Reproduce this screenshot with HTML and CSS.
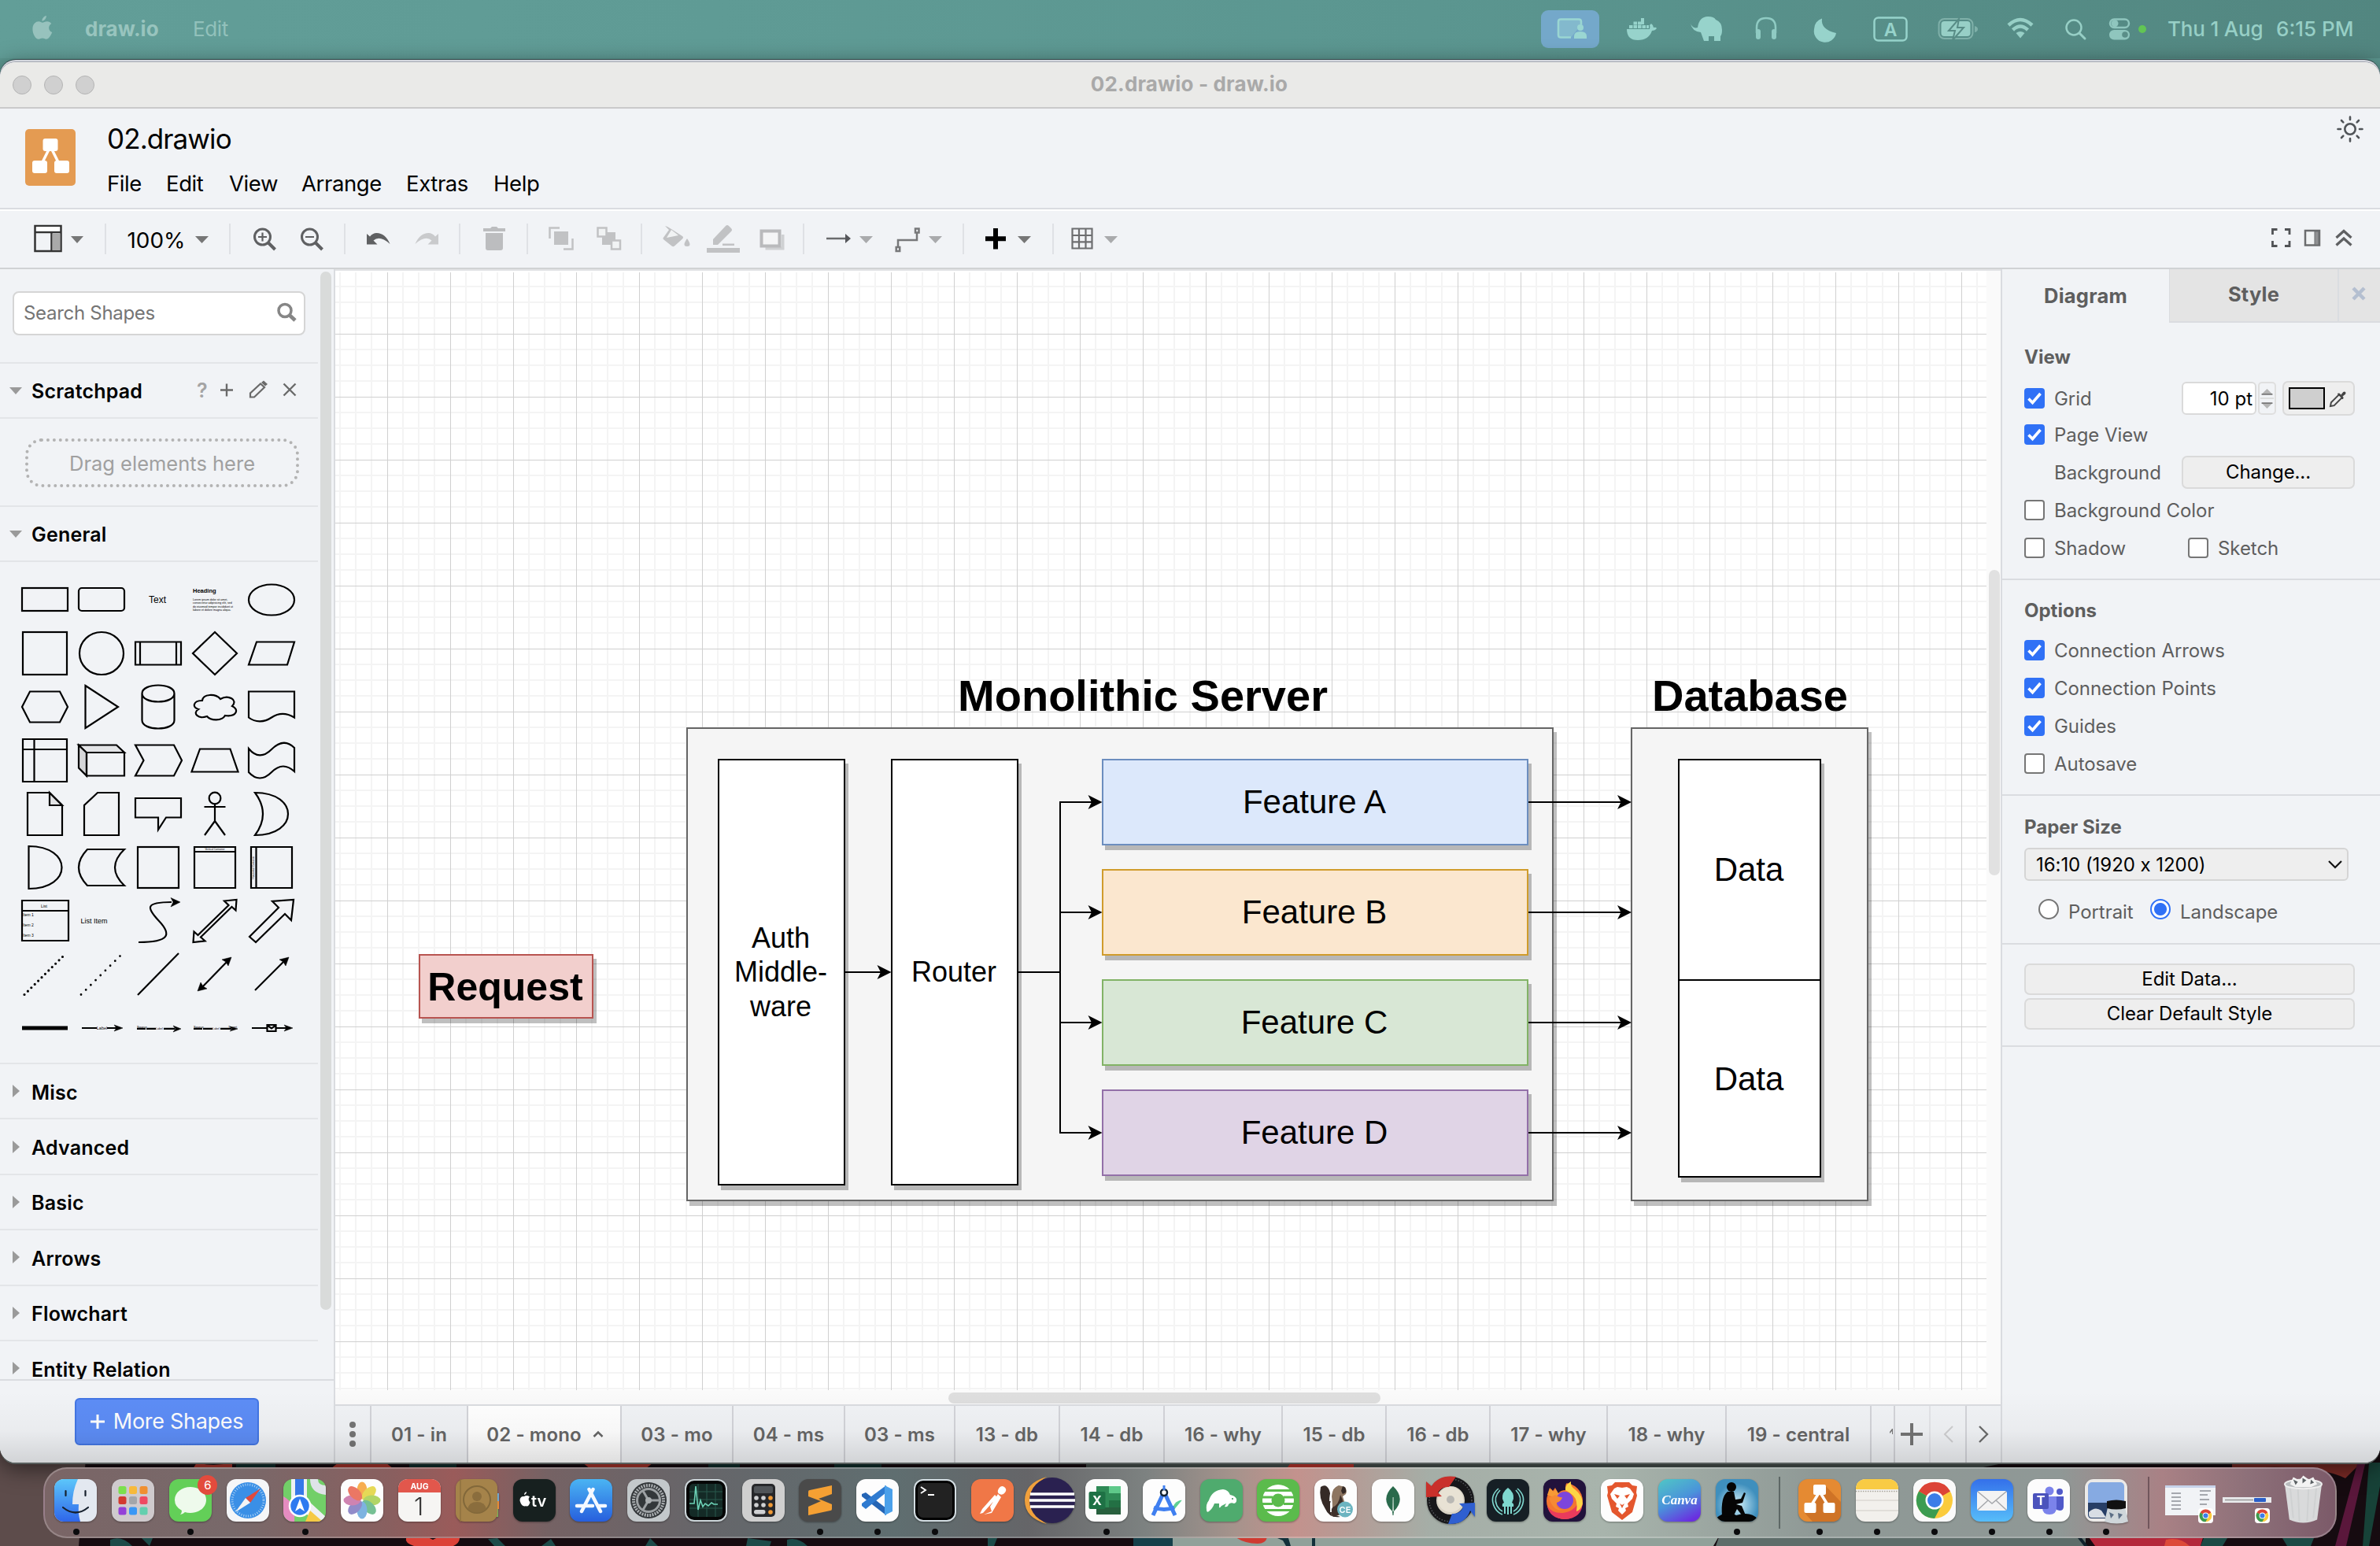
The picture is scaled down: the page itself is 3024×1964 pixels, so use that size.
FILE: index.html
```html
<!DOCTYPE html>
<html lang="en">
<head>
<meta charset="utf-8">
<title>02.drawio - draw.io</title>
<link rel="stylesheet" href="styles.css">
</head>
<body>
<svg class="wallpaper" viewBox="0 1840 3024 124" aria-hidden="true">
  <rect y="1840" width="3024" height="124" fill="#160b10"/>
  <path d="M0 1840H110L100 1964H0z" fill="#5d4c4b"/>
  <path d="M250 1858q20 6 45 0v8h-50zM430 1858h60l10 8h-80zM740 1858h90l-10 8h-70z" fill="#b8392f"/>
  <path d="M516 1954q-2 6 10 10h50q8-4 8-10-20-6-34 2-14-8-34-2z" fill="#dc4238"/>
  <path d="M140 1956q15-6 28 8h-28zM180 1954h14l-4 10zM620 1955l12-1 10 10h-14zM700 1955l-12 9h18zM820 1964l6-10 10 10zM950 1954l30 4-2 6h-30zM1000 1956q14-4 26 8h-26zM1255 1954h12l-4 10h-8z" fill="#1d4b49"/>
  <path d="M300 1858h50v6h-50zM520 1858h60v6h-60zM900 1858h40v6h-40zM1060 1858h60v6h-60z" fill="#12312f"/>
  <path d="M1380 1858h1170l-30 6H1380z" fill="#4c5754"/>
  <path d="M1440 1954h50v10h-50z" fill="#16404a"/>
  <path d="M1490 1950H2185l-8 14H1490z" fill="#91a19a"/>
  <path d="M1570 1953h40q-2 8-12 8-16 0-28-8zM1640 1858h80v6h-84z" fill="#cf3a31"/>
  <path d="M1623 1954h14l3 10h-6l-4-7zM1667 1954h4v10h-4z" fill="#12303a"/>
  <path d="M2185 1950H2650v14H2180z" fill="#5e6d6a"/>
  <path d="M2652 1950H2800l-4 14H2662z" fill="#b3283b"/>
  <path d="M2752 1956q18-4 30 8h-32z" fill="#dd4a39"/>
  <path d="M2640 1954h5l8 10h-5z" fill="#10202a"/>
  <path d="M2800 1954h30l-6 10h-28zM2900 1954h40l-4 10h-30z" fill="#1b4a45"/>
  <path d="M2836 1858H3000l-20 20q-40-20-144-12z" fill="#7c2b26"/>
  <path d="M2995 1860l10 0-24 104h-14z" fill="#5a173b"/>
  <path d="M3010 1858h14v30l-14 76h-8z" fill="#174238"/>
</svg>

<header class="menubar">
  <svg class="apple" viewBox="0 0 26 32"><path d="M18 0c.3 3-2.300 6.800-5.600 7-.3-3 2.600-6.500 5.600-7zM13 9c1.500 0 3.500-1.700 6.300-1.500 2 .1 4 1 5.300 2.800-4.800 3-4 9.500 1 11.400-1.500 4-4.500 9-7.700 9-2 0-2.700-1.200-5-1.200s-3 1.200-5 1.200C4 30.700 0 24 0 17.500 0 11 4 7.600 8 7.600c2.100 0 3.800 1.400 5 1.400z"/></svg>
  <span class="mb-app">draw.io</span>
  <span class="mb-item">Edit</span>
  <svg class="status" viewBox="1950 0 790 74">
    <rect x="1958" y="13" width="74" height="48" rx="9" fill="#74a8ca"/>
    <g fill="#9ad6d2" stroke="#9ad6d2">
      <path d="M1996 47.500H1983q-3 0-3-3V27.500q0-3 3-3h23q3 0 3 3v4" fill="#83b9cd" stroke-width="2.500"/>
      <circle cx="2008" cy="35" r="4" stroke="none"/><path d="M2000 49v-3q0-6 8-6t8 6v3z" stroke="none"/>
    </g>
    <g fill="#97d3cb">
      <path d="M2067 37h29q1-3 0-5l2-2q3 2 3 5 3-1 4 1-2 3-6 3-4 12-18 12-14 0-14-14z"/>
      <path d="M2070 32h4.500v4H2070zM2075.500 32h4.500v4h-4.500zM2081 32h4.500v4H2081zM2086.500 32h4.500v4h-4.500zM2075.500 27.500h4.500v4h-4.500zM2081 27.500h4.500v4H2081zM2085 23h4v8h-4zM2092 32h3v4h-3z"/>
      <path d="M2148 30q3 7 9 5 2-14 13-14 8 0 10 4 8 3 8 13 0 6-2 8v6h-8v-6h-7v6h-6l-4-11q-11-1-13-11z"/>
      <path d="M2305 37a14 14 0 0 1 10-13.500q-2 14 18 18.500a14 14 0 0 1-28-5z"/>
    </g>
    <path d="M2232 42v-7q0-12 12-12t12 12v7" fill="none" stroke="#8fcbc3" stroke-width="2.500"/>
    <rect x="2231" y="37" width="6" height="13" rx="3" fill="#8fcbc3"/><rect x="2251" y="37" width="6" height="13" rx="3" fill="#8fcbc3"/>
    <rect x="2381.500" y="22.500" width="41" height="29" rx="5" fill="none" stroke="#97d3cb" stroke-width="2.500"/>
    <text x="2402" y="45.500" class="st-a">A</text>
    <rect x="2463.500" y="24" width="43" height="25" rx="7" fill="none" stroke="#7fb0a9" stroke-width="2"/>
    <rect x="2466.500" y="27" width="37" height="19" rx="4" fill="#97cfc6"/>
    <path d="M2489 24l-13 15h8l-3 12 14-16h-8z" fill="#97cfc6" stroke="#588c86" stroke-width="2"/>
    <path d="M2509 33q4 1 4 4t-4 4z" fill="#7fb0a9"/>
    <g fill="none" stroke="#97cfc6" stroke-width="4.500"><path d="M2552 32q15-14 30 0M2557.500 38q9.500-9 19 0"/></g>
    <path d="M2561.500 42q5.500-4 11 0l-5.500 6.500z" fill="#97cfc6"/>
    <circle cx="2635" cy="35" r="9.500" fill="none" stroke="#97cfc6" stroke-width="2.500"/><path d="M2642 42l7 7" stroke="#97cfc6" stroke-width="3" stroke-linecap="round"/>
    <rect x="2681" y="24.500" width="24" height="10.500" rx="5.200" fill="none" stroke="#8fc6be" stroke-width="2.500"/><circle cx="2687" cy="29.700" r="4.500" fill="#8fc6be"/>
    <rect x="2680" y="38" width="26" height="12.500" rx="6.200" fill="#8fc6be"/><circle cx="2700" cy="44" r="3.800" fill="#5a8e88"/>
    <circle cx="2722" cy="37" r="5" fill="#62c554"/>
  </svg>
  <span class="mb-date">Thu 1 Aug</span>
  <span class="mb-time">6:15 PM</span>
</header>

<main class="window">
  <div class="titlebar">
    <div class="lights"><i></i><i></i><i></i></div>
    <div class="wtitle">02.drawio - draw.io</div>
  </div>

  <div class="appheader">
    <svg class="logo" viewBox="0 0 64 72"><rect width="64" height="72" rx="5" fill="#e49b52"/><path d="M32 22L20 46M32 22L44 46" stroke="#fff" stroke-width="3.500"/><g fill="#fff"><rect x="22.500" y="12" width="19" height="16" rx="3"/><rect x="9" y="40" width="19" height="16" rx="3"/><rect x="37" y="40" width="19" height="16" rx="3"/></g></svg>
    <div class="doc">
      <div class="filename">02.drawio</div>
      <nav class="menus"><span class="m-file">File</span><span class="m-edit">Edit</span><span class="m-view">View</span><span class="m-arr">Arrange</span><span class="m-ext">Extras</span><span>Help</span></nav>
    </div>
    <svg class="sun" viewBox="-17 -17 34 34" fill="none" stroke="#505458" stroke-width="2.600" stroke-linecap="round"><circle r="6.700"/><path d="M0-15.500V-12M0 12v3.500M-15.500 0h3.500M12 0h3.500M-11-11l2.300 2.300M8.700 8.700L11 11M-11 11l2.300-2.300M8.700-8.700L11-11"/></svg>
  </div>

  <div class="toolbar">
    <svg class="tg w1" viewBox="0 268 133 72"><g fill="none" stroke="#333" stroke-width="2.500"><rect x="44.500" y="287" width="33" height="32"/><path d="M44 295h34M65.500 295v24"/></g><rect x="66.500" y="296.500" width="10" height="21.500" fill="#a9a9a9"/><rect x="46" y="288" width="30" height="5.500" fill="#fff"/><path d="M90 300h16l-8 9z" fill="#767676"/></svg>
    <svg class="tg sep w2" viewBox="133 268 158 72"><text x="161.500" y="314.500" class="zoomtext" textLength="74" lengthAdjust="spacingAndGlyphs">100%</text><path d="M248 300h17l-8.500 9z" fill="#767676"/></svg>
    <svg class="tg sep w3" viewBox="291 268 146 72"><g fill="none" stroke="#5f6062" stroke-width="3"><circle cx="333.500" cy="301" r="10"/><circle cx="393.500" cy="301" r="10"/><path d="M328 301h11M333.500 295.500v11M388 301h11" stroke-width="2.200"/><path d="M341 308.500l8.500 8.500M401 308.500l8.500 8.500" stroke-width="4"/></g></svg>
    <svg class="tg sep w4" viewBox="437 268 146 72"><path d="M466 297v13.500h13.500l-5-5q8-7 21 4.500-6-14-17-14-5 0-8.500 4.500z" fill="#5f6062"/><path d="M557 297v13.500h-13.500l5-5q-8-7-21 4.500 6-14 17-14 5 0 8.500 4.500z" fill="#c9cacc"/></svg>
    <svg class="tg sep w5" viewBox="583 268 86 72"><path d="M614 290h9l2-2h6l2 2h9v4h-28zM617 296h22v19q0 3-3 3h-16q-3 0-3-3z" fill="#bcbdbf"/></svg>
    <svg class="tg sep w6" viewBox="669 268 145 72"><g fill="#c1c2c4"><rect x="704" y="294" width="18" height="17"/><rect x="765" y="295" width="17" height="16"/></g><g fill="none" stroke="#c1c2c4" stroke-width="2.500"><path d="M711 289.500h-12.500V303M716 316.500h11.500V303"/><rect x="759.500" y="289.500" width="11" height="11" fill="#f1f3f4"/><rect x="777" y="305.500" width="11" height="11" fill="#f1f3f4"/></g></svg>
    <svg class="tg sep w7" viewBox="814 268 206 72"><g fill="#c1c2c4"><path d="M848 288l-3-1 5 5-6.500 9q-2 2 0 3.500l10 8q2 1.500 3.500 0l10-9q2-2 0-3.500L853 291zM873 303q7 10 0 10t0-10z"/><path d="M853 292l9 7-15 3z" fill="#f1f3f4"/><path d="M906 311v-7l16-17q2-2 4 0l3 3q2 2 0 4l-17 17z"/><rect x="918" y="309.500" width="15" height="2.500"/><rect x="898" y="315" width="42" height="6"/><path d="M993 298h3.500v19.500h-24v-4H993z" opacity=".7"/></g><rect x="967.500" y="293.500" width="23" height="19" fill="#f4f5f6" stroke="#b9babc" stroke-width="4"/></svg>
    <svg class="tg sep w8" viewBox="1020 268 203 72"><path d="M1050 303h26" stroke="#6a6b6d" stroke-width="2.500"/><path d="M1074 297l7 6-7 6z" fill="#55565a"/><path d="M1092 300h17l-8.500 9zM1180 300h17l-8.500 9z" fill="#a9aaac"/><g fill="none" stroke="#77787a" stroke-width="2.500"><path d="M1141 314v-9h24v-9"/><rect x="1138.700" y="314" width="4.500" height="5"/><rect x="1163" y="290.500" width="4.500" height="5"/></g></svg>
    <svg class="tg sep w9" viewBox="1223 268 114 72"><path d="M1265 290v26.500M1252 303.200h26" stroke="#000" stroke-width="6"/><path d="M1293 300h17l-8.500 9z" fill="#767676"/></svg>
    <svg class="tg sep w10" viewBox="1337 268 100 72"><path d="M1362.500 290.500h25v25h-25zM1371 290v26M1379.500 290v26M1362 299h26M1362 307.300h26" fill="none" stroke="#6d6e70" stroke-width="2.200"/><path d="M1403 300h17l-8.500 9z" fill="#a9aaac"/></svg>
    <svg class="tg right" viewBox="2870 268 154 72"><path d="M2887.500 298v-6.500h6M2903 291.500h6v6.500M2887.500 306v6.500h6M2903 312.500h6V306" fill="none" stroke="#505255" stroke-width="2.800"/><rect x="2929" y="293" width="18" height="18.500" fill="#f1f3f4" stroke="#6b6c6e" stroke-width="2.500"/><rect x="2941" y="294" width="5" height="17" fill="#8f9092" stroke="#6b6c6e"/><path d="M2968.500 302l9.500-8.500 9.500 8.500M2968.500 311.500l9.500-8.500 9.500 8.500" fill="none" stroke="#5f6062" stroke-width="3.200"/></svg>
  </div>

  <div class="workspace">
    <aside class="sidebar">
      <div class="scroller">
        <div class="sections">
          <div class="searchwrap"><div class="search"><span>Search Shapes</span><svg viewBox="0 0 24 24"><circle cx="10" cy="9.500" r="8" fill="none" stroke="#868686" stroke-width="3.500"/><path d="M15.500 15l7.500 7" stroke="#868686" stroke-width="4.800"/></svg></div></div>
          <div class="sec open"><b class="arrow down"></b><span>Scratchpad</span><svg class="tools" viewBox="248 484 132 26"><text x="250" y="506" class="qm">?</text><path d="M280 496.500h16M288 488.500v16" stroke="#6a6a6a" stroke-width="2.400"/><path d="M318 505.500v-5l13-12 5 4.500-13 12.500z" fill="none" stroke="#6a6a6a" stroke-width="2.200"/><path d="M332 487l3-2.500 5 4.500-3 2.500z" fill="#6a6a6a"/><path d="M360.500 488.500l15 15M375.500 488.500l-15 15" stroke="#6a6a6a" stroke-width="2.400"/></svg></div>
          <div class="scratch"><svg viewBox="0 0 350 64"><rect x="3" y="3" width="344" height="58" rx="19" fill="none" stroke="#b3b3b3" stroke-width="4" stroke-linecap="round" stroke-dasharray="0 7.930"/></svg><span>Drag elements here</span></div>
          <div class="sec open"><b class="arrow down"></b><span>General</span></div>
          <div class="palette">
            <svg viewBox="-36 -34 72 68"><rect x="-29" y="-15" width="58" height="29"/></svg>
            <svg viewBox="-36 -34 72 68"><rect x="-29" y="-15" width="58" height="29" rx="4"/></svg>
            <svg viewBox="-36 -34 72 68"><text x="-1" y="4" font-size="12" text-anchor="middle">Text</text></svg>
            <svg viewBox="-36 -34 72 68"><text x="-28" y="-9" font-size="7.500" font-weight="bold">Heading</text><g font-size="3.600"><text x="-28" y="1">Lorem ipsum dolor sit amet,</text><text x="-28" y="5.300">consectetur adipisicing elit, sed</text><text x="-28" y="9.600">do eiusmod tempor incididunt ut</text><text x="-28" y="13.900">labore et dolore magna aliqua.</text></g></svg>
            <svg viewBox="-36 -34 72 68"><ellipse rx="29" ry="19.500"/></svg>

            <svg viewBox="-36 -34 72 68"><rect x="-28" y="-27" width="56" height="54"/></svg>
            <svg viewBox="-36 -34 72 68"><ellipse rx="28" ry="27"/></svg>
            <svg viewBox="-36 -34 72 68"><path d="M-29-14.500h58v29h-58zM-23-14.500v29M23-14.500v29"/></svg>
            <svg viewBox="-36 -34 72 68"><path d="M0-27L28 0 0 27-28 0z"/></svg>
            <svg viewBox="-36 -34 72 68"><path d="M-19-14.500h48l-9 29h-49z"/></svg>

            <svg viewBox="-36 -34 72 68"><path d="M-19-19.500h38L29 0 19 19.500h-38L-29 0z"/></svg>
            <svg viewBox="-36 -34 72 68"><path d="M-20.500-27L21 0-20.500 27z"/></svg>
            <svg viewBox="-36 -34 72 68"><path d="M-20.500-17v34c0 14 41 14 41 0v-34c0-14-41-14-41 0c0 14 41 14 41 0"/></svg>
            <svg viewBox="-36 -34 72 68"><path d="M-16-8c-12 0-13 9-5 11-8 5 0 13 11 9 5 6 19 6 23-1 15 2 18-8 9-12 8-8-5-15-15-9-6-7-22-7-23 2z"/></svg>
            <svg viewBox="-36 -34 72 68"><path d="M-29-19.500h58v33c-10-6-20-6-29 0s-20 7-29 0z"/></svg>

            <svg viewBox="-36 -34 72 68"><path d="M-28-27h56v54h-56zM-13.500-27v54M-28-14h56"/></svg>
            <svg viewBox="-36 -34 72 68"><path d="M-29-19.500l10 9.500V19.500l-10-10z" class="sh2"/><path d="M-29-19.500h48l10 9.500h-48z" class="sh1"/><path d="M-19-10h48v29.500h-48z"/></svg>
            <svg viewBox="-36 -34 72 68"><path d="M-29-19.500h49L30 0 20 19.500h-49L-18.500 0z"/></svg>
            <svg viewBox="-36 -34 72 68"><path d="M-19-14.500h38.500L29.500 14.500h-59z"/></svg>
            <svg viewBox="-36 -34 72 68"><path d="M-29-15c9 11 19 11 29 1s20-11 29-2v30c-10-9-19-9-29 1s-20 10-29 0z"/></svg>

            <svg viewBox="-36 -34 72 68"><path d="M6-27L22-11H6z" class="sh1"/><path d="M-22-27H6L22-11v38h-44z"/></svg>
            <svg viewBox="-36 -34 72 68"><path d="M-5-27h27v54h-44v-38z"/></svg>
            <svg viewBox="-36 -34 72 68"><path d="M-29-20h58V4.500H10L0 20V4.500h-29z"/></svg>
            <svg viewBox="-36 -34 72 68"><circle cy="-20" r="7.300"/><path d="M-13.500-9h27M0-12.500V9M0 9l-13 18M0 9l13 18"/></svg>
            <svg viewBox="-36 -34 72 68"><path d="M-21-27c56 0 56 54 0 54q20-27 0-54z"/></svg>

            <svg viewBox="-36 -34 72 68"><path d="M-20.500-27c56 0 56 54 0 54z"/></svg>
            <svg viewBox="-36 -34 72 68"><path d="M-18-23h47q-24 23 0 46h-47q-22-23 0-46z"/></svg>
            <svg viewBox="-36 -34 72 68"><rect x="-26" y="-26" width="52" height="52"/></svg>
            <svg viewBox="-36 -34 72 68"><path d="M-26-26h52v52h-52zM-26-20h52"/><text y="-22" font-size="3.200" text-anchor="middle">Vertical Container</text></svg>
            <svg viewBox="-36 -34 72 68"><path d="M-26-26h52v52h-52zM-19.500-26v52"/><text transform="translate(-21.800 0) rotate(-90)" font-size="3.200" text-anchor="middle">Horizontal Container</text></svg>

            <svg viewBox="-36 -34 72 68"><path d="M-29-26h59v51h-59zM-29-13h59"/><g font-size="5"><text x="-1" y="-17.500" text-anchor="middle">List</text><text x="-28" y="-6">Item 1</text><text x="-28" y="7">Item 2</text><text x="-28" y="20">Item 3</text></g></svg>
            <svg viewBox="-36 -34 72 68"><text x="-9.500" y="3" font-size="9" text-anchor="middle">List Item</text></svg>
            <svg viewBox="-36 -34 72 68"><path d="M-25 27c40 0 42-10 26-27s-18-24 16-24"/><path d="M28-24l-12-5.500 3 5.500-3 6z" class="solid"/></svg>
            <svg viewBox="-36 -34 72 68"><path d="M27.500-27L26.500-13.500 21.500-18-18 20.500-12.500 25.500-27.500 27-26.500 13.500-21.500 18 17.500-20 12-25.500z"/></svg>
            <svg viewBox="-36 -34 72 68"><path d="M28-27L25-1l-8-8-37 36-8-7 37-37-8-8z"/></svg>

            <svg viewBox="-36 -34 72 68"><path d="M-26 25.500L26-26" stroke-dasharray="0 6.200" stroke-width="3.200" stroke-linecap="round"/></svg>
            <svg viewBox="-36 -34 72 68"><path d="M-26 25.500L24-24" stroke-dasharray="0 8.700" stroke-width="2.800" stroke-linecap="round"/></svg>
            <svg viewBox="-36 -34 72 68"><path d="M-26 26L26-27"/></svg>
            <svg viewBox="-36 -34 72 68"><path d="M-17 17L17-18"/><path d="M21-22l-4 11-3-5-5-3zM-22 21l4-11 3 5 5 3z" class="solid"/></svg>
            <svg viewBox="-36 -34 72 68"><path d="M-21 20L17-18"/><path d="M22-22l-4 11-3-5-5-3z" class="solid"/></svg>

            <svg viewBox="-36 -34 72 68"><path d="M-29 0h58" stroke-width="5"/></svg>
            <svg viewBox="-36 -34 72 68"><path d="M-25 0h19M7 0h14"/><path d="M27 0l-11-4 3 4-3 4z" class="solid"/><text x=".500" y="2" font-size="5.500" text-anchor="middle">Label</text></svg>
            <svg viewBox="-36 -34 72 68"><path d="M-27 .800h11M-15 .800h12M7 .800h14"/><path d="M29 1l-10-4 3 4-3 4z" class="solid"/><text x="-27" y="-.500" font-size="4">Source</text><text x="1.500" y="2" font-size="3.500" text-anchor="middle">Label</text></svg>
            <svg viewBox="-36 -34 72 68"><path d="M-27 .800h11M-15 .800h12M7 .800h14"/><path d="M29 1l-10-3 3 3-3 3z" class="solid"/><text x="-27" y="-.500" font-size="4">Source</text><text x="1.500" y="2" font-size="3.500" text-anchor="middle">Label</text><text x="17" y="-.500" font-size="4">Target</text></svg>
            <svg viewBox="-36 -34 72 68"><path d="M-25 0h19M6 0h14M-5.500-4h11v8h-11zM-5.500-3.500L0 .500l5.500-4"/><path d="M27 0l-11-4 3 4-3 4z" class="solid"/></svg>
          </div>
          <div class="sec"><b class="arrow rt"></b><span>Misc</span></div>
          <div class="sec"><b class="arrow rt"></b><span>Advanced</span></div>
          <div class="sec"><b class="arrow rt"></b><span>Basic</span></div>
          <div class="sec"><b class="arrow rt"></b><span>Arrows</span></div>
          <div class="sec"><b class="arrow rt"></b><span>Flowchart</span></div>
          <div class="sec"><b class="arrow rt"></b><span>Entity Relation</span></div>
        </div>
        <div class="vbar"></div>
      </div>
      <div class="sidefoot"><div class="more"><svg viewBox="0 0 18 18"><path d="M9 0v18M0 9h18" stroke="#fff" stroke-width="3"/></svg>More Shapes</div></div>
    </aside>

    <section class="center">
      <div class="canvasrow">
        <svg class="canvas" viewBox="426 344 2098 1422">
          <defs>
            <pattern id="grid" x="492" y="424" width="80" height="80" patternUnits="userSpaceOnUse">
              <path d="M19 0h2v80h-2zM39 0h2v80h-2zM59 0h2v80h-2zM0 19h80v2H0zM0 39h80v2H0zM0 59h80v2H0z" fill="#f4f4f4"/>
              <path d="M0 0h1v80H0zM0 0h80v1H0z" fill="#d0d0d0"/>
            </pattern>
          </defs>
          <rect x="426" y="344" width="2098" height="1422" fill="#fff"/>
          <rect x="426" y="346" width="2098" height="1420" fill="url(#grid)"/>
          <g fill="#000" opacity=".25">
            <rect x="876" y="930" width="1102" height="602"/><rect x="2076" y="930" width="302" height="602"/><rect x="536" y="1218" width="222" height="82"/>
          </g>
          <g stroke-width="2">
            <rect x="873" y="925" width="1100" height="600" fill="#f5f5f5" stroke="#666"/>
            <rect x="2073" y="925" width="300" height="600" fill="#f5f5f5" stroke="#666"/>
            <rect x="533" y="1213" width="220" height="80" fill="#f2cfcd" stroke="#b85450"/>
          </g>
          <g fill="#b7b7b7">
            <rect x="916" y="970" width="162" height="542"/><rect x="1136" y="970" width="162" height="542"/>
            <rect x="1404" y="970" width="542" height="110"/><rect x="1404" y="1110" width="542" height="110"/><rect x="1404" y="1250" width="542" height="110"/><rect x="1404" y="1390" width="542" height="110"/>
            <rect x="2136" y="970" width="182" height="532"/>
          </g>
          <g stroke-width="2">
            <rect x="913" y="965" width="160" height="540" fill="#fff" stroke="#000"/>
            <rect x="1133" y="965" width="160" height="540" fill="#fff" stroke="#000"/>
            <rect x="1401" y="965" width="540" height="108" fill="#dce8fb" stroke="#6c8ebf"/>
            <rect x="1401" y="1105" width="540" height="108" fill="#fbe7cf" stroke="#d09c2c"/>
            <rect x="1401" y="1245" width="540" height="108" fill="#d8e7d5" stroke="#82b366"/>
            <rect x="1401" y="1385" width="540" height="108" fill="#e0d4e6" stroke="#9370a8"/>
            <rect x="2133" y="965" width="180" height="280" fill="#fff" stroke="#000"/>
            <rect x="2133" y="1245" width="180" height="250" fill="#fff" stroke="#000"/>
          </g>
          <path d="M1074 1235h46M1294 1235h53M1388 1019h-41v420h41M1347 1159h41M1347 1299h41M1942 1019h118M1942 1159h118M1942 1299h118M1942 1439h118" fill="none" stroke="#000" stroke-width="2"/>
          <g fill="#000">
            <path id="ah" d="M1132.500 1235l-18-9 4.500 9-4.500 9z"/>
            <use href="#ah" x="268" y="-216"/><use href="#ah" x="268" y="-76"/><use href="#ah" x="268" y="64"/><use href="#ah" x="268" y="204"/>
            <use href="#ah" x="940.500" y="-216"/><use href="#ah" x="940.500" y="-76"/><use href="#ah" x="940.500" y="64"/><use href="#ah" x="940.500" y="204"/>
          </g>
          <g class="dt" text-anchor="middle">
            <g font-weight="bold"><text x="1452" y="903" font-size="56">Monolithic Server</text><text x="2223.500" y="903" font-size="56">Database</text><text x="642" y="1271" font-size="50">Request</text></g>
            <g font-size="36"><text x="992" y="1203.500">Auth</text><text x="992" y="1247">Middle-</text><text x="992" y="1291">ware</text><text x="1212" y="1247">Router</text></g>
            <g font-size="42"><text x="1670" y="1032.500">Feature A</text><text x="1670" y="1172.500">Feature B</text><text x="1670" y="1312.500">Feature C</text><text x="1670" y="1452.500">Feature D</text><text x="2222" y="1118.500">Data</text><text x="2222" y="1384.500">Data</text></g>
          </g>
        </svg>
        <div class="cvbar"><i></i></div>
      </div>
      <div class="chbar"><i></i></div>
      <div class="tabs">
        <div class="tab t-dots"><svg viewBox="0 0 8 32" fill="#757575"><circle cx="4" cy="4" r="4"/><circle cx="4" cy="16" r="4"/><circle cx="4" cy="28" r="4"/></svg></div>
        <div class="tab t1">01 - in</div>
        <div class="tab t2 active">02 - mono<svg viewBox="0 0 14 8"><path d="M1.500 7L7 1.500 12.500 7" fill="none" stroke="#666" stroke-width="2.600"/></svg></div>
        <div class="tab t3">03 - mo</div>
        <div class="tab t3">04 - ms</div>
        <div class="tab t4">03 - ms</div>
        <div class="tab t5">13 - db</div>
        <div class="tab t5">14 - db</div>
        <div class="tab t6">16 - why</div>
        <div class="tab t7">15 - db</div>
        <div class="tab t7">16 - db</div>
        <div class="tab t8">17 - why</div>
        <div class="tab t9">18 - why</div>
        <div class="tab t10">19 - central</div>
        <div class="tab t11"><svg viewBox="0 0 4 8"><path d="M0 5l3-4h1v7H3V4L0 7z" fill="#777"/></svg></div>
        <div class="tab t12"><svg viewBox="0 0 28 28"><path d="M14 0v28M0 14h28" stroke="#747474" stroke-width="4"/></svg></div>
        <div class="tab t13"><svg viewBox="0 0 13 22"><path d="M12 1L2 11l10 10" fill="none" stroke="#cfcfd1" stroke-width="2"/></svg></div>
        <div class="tab t14"><svg viewBox="0 0 13 22"><path d="M1 1l10 10L1 21" fill="none" stroke="#6b6b6b" stroke-width="2.400"/></svg></div>
      </div>
    </section>

    <aside class="format">
      <div class="ftabs"><div class="ft on">Diagram</div><div class="ft off">Style</div><div class="ft x"><svg viewBox="0 0 20 20"><path d="M3 3l14 14M17 3L3 17" stroke="#b4bfd0" stroke-width="4.500"/></svg></div></div>
      <div class="fsec s1">
        <h4>View</h4>
        <div class="fr r-grid"><i class="cb on"><svg viewBox="0 0 26 26"><path d="M5.500 13.500l5 5L20.500 7" /></svg></i><label>Grid</label>
          <div class="ctl"><div class="num">10 pt</div><div class="spin"><svg viewBox="0 0 22 40"><path d="M1 20h20" stroke="#dadada" stroke-width="2"/><path d="M3 14l8-8 8 8zM3 27l8 8 8-8z" fill="#b5b5b5"/><path d="M3 14h16M3 27h16" stroke="#777" stroke-width="2"/></svg></div>
          <div class="colorbtn"><i></i><svg viewBox="0 0 22 22"><path d="M1 21l1-5L13 5l4 4L6 20zM11 4l7 7" fill="none" stroke="#444" stroke-width="2"/><path d="M15 6l3-4q2-1 3 0t0 3l-4 3z" fill="#444"/></svg></div></div></div>
        <div class="fr"><i class="cb on"><svg viewBox="0 0 26 26"><path d="M5.500 13.500l5 5L20.500 7" /></svg></i><label>Page View</label></div>
        <div class="fr r50"><i class="cb none"></i><label>Background</label><div class="btn change">Change...</div></div>
        <div class="fr"><i class="cb"></i><label>Background Color</label></div>
        <div class="fr"><i class="cb"></i><label class="half">Shadow</label><i class="cb"></i><label>Sketch</label></div>
      </div>
      <div class="fsec s2">
        <h4>Options</h4>
        <div class="fr"><i class="cb on"><svg viewBox="0 0 26 26"><path d="M5.500 13.500l5 5L20.500 7" /></svg></i><label>Connection Arrows</label></div>
        <div class="fr"><i class="cb on"><svg viewBox="0 0 26 26"><path d="M5.500 13.500l5 5L20.500 7" /></svg></i><label>Connection Points</label></div>
        <div class="fr"><i class="cb on"><svg viewBox="0 0 26 26"><path d="M5.500 13.500l5 5L20.500 7" /></svg></i><label>Guides</label></div>
        <div class="fr"><i class="cb"></i><label>Autosave</label></div>
      </div>
      <div class="fsec s3">
        <h4>Paper Size</h4>
        <div class="select"><span>16:10 (1920 x 1200)</span><svg viewBox="0 0 18 12"><path d="M1 2l8 8 8-8" fill="none" stroke="#111" stroke-width="2.200"/></svg></div>
        <div class="radios"><i class="rd"></i><label class="lp">Portrait</label><i class="rd on"></i><label>Landscape</label></div>
      </div>
      <div class="fsec s4"><div class="btn">Edit Data...</div><div class="btn">Clear Default Style</div></div>
    </aside>
  </div>
  <div class="shade"></div>
</main>

<footer class="dock">
  <div class="di run"><svg viewBox="0 0 54 54"><defs><linearGradient id="gb" x2="0" y2="1"><stop stop-color="#5cc6fa"/><stop offset="1" stop-color="#2f66ea"/></linearGradient><clipPath id="sq"><rect width="54" height="54" rx="12"/></clipPath></defs><g clip-path="url(#sq)"><rect width="54" height="54" fill="#e3e8f0"/><path d="M0 0h30q-7 15-7 32h8q-1 12 2 22H0z" fill="url(#gb)"/></g><path d="M14.500 15v6M39.500 15v6M11 36q16 13 32 0" fill="none" stroke="#17212e" stroke-width="2.200" stroke-linecap="round"/></svg></div>
  <div class="di"><svg viewBox="0 0 54 54"><rect width="54" height="54" rx="12" fill="#cfcacd"/><g><rect x="8.500" y="9" width="10" height="10" rx="2.500" fill="#7be04c"/><rect x="22" y="9" width="10" height="10" rx="2.500" fill="#f7b93a"/><rect x="35.500" y="9" width="10" height="10" rx="2.500" fill="#f08f30"/><rect x="8.500" y="22" width="10" height="10" rx="2.500" fill="#d33a30"/><rect x="22" y="22" width="10" height="10" rx="2.500" fill="#a3a6aa"/><rect x="35.500" y="22" width="10" height="10" rx="2.500" fill="#ef4a62"/><rect x="8.500" y="35.500" width="10" height="10" rx="2.500" fill="#9440d8"/><rect x="22" y="35.500" width="10" height="10" rx="2.500" fill="#3a97f5"/><rect x="35.500" y="35.500" width="10" height="10" rx="2.500" fill="#63cfae"/></g></svg></div>
  <div class="di run"><svg viewBox="0 0 54 54"><rect width="54" height="54" rx="12" fill="#63cf58"/><path d="M27 10c11 0 20 7 20 16.500S38 43 27 43q-4 0-7-1-3 3-6 3 2-2 2-5Q7 35 7 26.500C7 17 16 10 27 10z" fill="#eefaec"/></svg><span class="badge">6</span></div>
  <div class="di"><svg viewBox="0 0 54 54"><rect width="54" height="54" rx="12" fill="#f5f6f8"/><circle cx="27" cy="27" r="23" fill="#3a8fe6"/><circle cx="27" cy="27" r="20" fill="none" stroke="#a8d0f5" stroke-width="3" stroke-dasharray="1 2"/><path d="M43 12L30 30l-6-6z" fill="#e04a3c"/><path d="M11 42l13-18 6 6z" fill="#f4f4f4"/></svg></div>
  <div class="di run"><svg viewBox="0 0 54 54"><g clip-path="url(#sq)"><rect width="54" height="54" fill="#72cf68"/><path d="M0 22q16 8 14 32H0z" fill="#e58cc0"/><path d="M10 0h20v26l24 22v6H40L10 26z" fill="#eef0f2"/><path d="M15 0h11v30H15z" fill="#3578e8"/><path d="M34 0q0 18 20 20V8Q44 8 44 0z" fill="#dfe3e8"/><path d="M28 54l6-14 16 14z" fill="#f5c944"/></g><circle cx="21" cy="34" r="13" fill="#2f7af0" stroke="#fff" stroke-width="2.500"/><path d="M21 25l6 16-6-4-6 4z" fill="#fff"/></svg></div>
  <div class="di"><svg viewBox="0 0 54 54"><rect width="54" height="54" rx="12" fill="#fdfdfd"/><g opacity=".85"><ellipse cx="27" cy="14.500" rx="6.500" ry="11" fill="#f6a032"/><ellipse cx="27" cy="14.500" rx="6.500" ry="11" fill="#e3d33a" transform="rotate(45 27 27)"/><ellipse cx="27" cy="14.500" rx="6.500" ry="11" fill="#a5cf4c" transform="rotate(90 27 27)"/><ellipse cx="27" cy="14.500" rx="6.500" ry="11" fill="#5fb682" transform="rotate(135 27 27)"/><ellipse cx="27" cy="14.500" rx="6.500" ry="11" fill="#67a7dc" transform="rotate(180 27 27)"/><ellipse cx="27" cy="14.500" rx="6.500" ry="11" fill="#7f78c0" transform="rotate(225 27 27)"/><ellipse cx="27" cy="14.500" rx="6.500" ry="11" fill="#c86ea4" transform="rotate(270 27 27)"/><ellipse cx="27" cy="14.500" rx="6.500" ry="11" fill="#e8604a" transform="rotate(315 27 27)"/></g></svg></div>
  <div class="di"><svg viewBox="0 0 54 54"><g clip-path="url(#sq)"><rect width="54" height="54" fill="#f6f5f3"/><rect width="54" height="17" fill="#e2574c"/></g><text x="27" y="13" class="aug">AUG</text><text x="26" y="46" class="one">1</text></svg></div>
  <div class="di"><svg viewBox="0 0 54 54"><path d="M48 18h7v10h-7z" fill="#6fa7cf"/><path d="M48 28h7v10h-7z" fill="#e58b37"/><path d="M48 38h6v10h-6z" fill="#79b35a"/><rect width="53" height="54" rx="11" fill="#a5834a"/><path d="M6 0v54" stroke="#8f7040" stroke-width="1.500"/><circle cx="27" cy="26" r="17" fill="none" stroke="#82683a" stroke-width="2"/><circle cx="27" cy="22" r="6" fill="#8a6d3d"/><path d="M15 38q2-9 12-9t12 9q-12 9-24 0z" fill="#8a6d3d"/></svg></div>
  <div class="di"><svg viewBox="0 0 54 54"><rect width="54" height="54" rx="12" fill="#17201f"/><path d="M17 16q0 3-3 4 0-3 3-4zM14 22q2-1.500 4-1 1.500 0 3 1.500-3 3 .500 7-1.500 5-4 5-1.500-.500-3 0-4 0-6-7 0-6 5.500-5.500z" fill="#fff"/><text x="23" y="35" class="tv">tv</text></svg></div>
  <div class="di"><svg viewBox="0 0 54 54"><defs><linearGradient id="as" x2="0" y2="1"><stop stop-color="#4ab4f3"/><stop offset="1" stop-color="#275fdd"/></linearGradient></defs><rect width="54" height="54" rx="12" fill="url(#as)"/><path d="M29.500 13L15 41M24.500 13L39 41M9 34h20M36 34h9" stroke="#f5f9ff" stroke-width="4.500" stroke-linecap="round"/></svg></div>
  <div class="di"><svg viewBox="0 0 54 54"><rect width="54" height="54" rx="12" fill="#c3c8cb"/><circle cx="27" cy="27" r="23" fill="#33373a"/><circle cx="27" cy="27" r="19" fill="none" stroke="#a9adb0" stroke-width="4" stroke-dasharray="2 1.300"/><circle cx="27" cy="27" r="14.500" fill="none" stroke="#9ca0a3" stroke-width="3"/><path d="M27 27h14M27 27l-7-12M27 27l-7 12" stroke="#9ca0a3" stroke-width="3"/><circle cx="27" cy="27" r="4" fill="#a9adb0"/></svg></div>
  <div class="di"><svg viewBox="0 0 54 54"><rect width="54" height="54" rx="12" fill="#cdd6da"/><rect x="2" y="2" width="50" height="50" rx="10" fill="#050606"/><rect x="6" y="6" width="42" height="42" rx="5" fill="#142a26"/><path d="M6 16h42M6 26h42M6 37h42M17 6v42M28 6v42M39 6v42" stroke="#28584c" stroke-width="1"/><path d="M6 31h6l2-22 3 30 3-12 3 8 3-4 4 3 4-4 3 2h5" fill="none" stroke="#6cd1b6" stroke-width="1.600"/></svg></div>
  <div class="di"><svg viewBox="0 0 54 54"><rect width="54" height="54" rx="12" fill="#cfcfcf"/><rect x="12" y="6" width="30" height="42" rx="5" fill="#26272a"/><rect x="15" y="9" width="24" height="9" rx="2" fill="#505458"/><g fill="#cfd0d2"><circle cx="18" cy="24" r="2.800"/><circle cx="27" cy="24" r="2.800"/><circle cx="18" cy="33" r="2.800"/><circle cx="27" cy="33" r="2.800"/><rect x="15" y="39" width="14.500" height="5.500" rx="2.700"/></g><g fill="#f09a37"><circle cx="36" cy="24" r="2.800"/><circle cx="36" cy="33" r="2.800"/><circle cx="36" cy="42" r="2.800"/></g></svg></div>
  <div class="di run"><svg viewBox="0 0 54 54"><rect width="54" height="54" rx="12" fill="#4a4a4a"/><path d="M42 8v11L25 25l17 7v6q0 2-2 2L12 46V35l16-7-16-6v-6q0-2 2-2z" fill="#f5a033"/></svg></div>
  <div class="di run"><svg viewBox="0 0 54 54"><rect width="54" height="54" rx="12" fill="#fdfdfd"/><path d="M7 19l5-2 26 20v9L7 22z" fill="#2565b5"/><path d="M7 34l5 4 26-21V8L7 31z" fill="#2f7bd0"/><path d="M36 8l10 5v28l-10 5z" fill="#4aa0ea"/></svg></div>
  <div class="di run"><svg viewBox="0 0 54 54"><rect width="54" height="54" rx="12" fill="#d3dde2"/><rect x="2" y="2" width="50" height="50" rx="10" fill="#000"/><rect x="5" y="5" width="44" height="44" rx="7" fill="#222"/><path d="M9 10l6 4-6 4M18 20h8" fill="none" stroke="#fff" stroke-width="1.900"/></svg></div>
  <div class="di"><svg viewBox="0 0 54 54"><rect width="54" height="54" rx="12" fill="#f07747"/><path d="M42 10q4 3 1 7t-7 2-1-7 7-2zM34 19l4 4-12 20-10 2 10-4-2-6zM30 20l3 3-18 20-4 1 3-6z" fill="#fff"/></svg></div>
  <div class="di"><svg viewBox="-4 -3 62 62" class="big"><path d="M24-2Q-4 6-4 28t28 30Q4 46 4 28T24-2z" fill="#f0a03c"/><circle cx="31" cy="28" r="29" fill="#2a2150"/><path d="M3 20h56M2 28h58M3 36h56" stroke="#fff" stroke-width="3.500"/></svg></div>
  <div class="di run"><svg viewBox="0 0 54 54"><rect width="54" height="54" rx="12" fill="#fcfcfc"/><path d="M14 9h31v36H14z" fill="#2f8a56"/><path d="M30 9h15v9H30z" fill="#5fc98a"/><path d="M30 27h15v9H30z" fill="#237044"/><path d="M14 36h31v9H14z" fill="#275f3d"/><rect x="4.500" y="16" width="21" height="22" rx="2" fill="#1e7145"/><text x="15" y="33" class="exl">X</text></svg></div>
  <div class="di"><svg viewBox="0 0 54 54"><rect width="54" height="54" rx="12" fill="#fdfdfd"/><path d="M30 37a12 12 0 0 1 18 0z" fill="#5ed094" transform="rotate(-50 38 30)"/><path d="M27 16L13 46M27 16l14 30M14 36q13 5 26 0" fill="none" stroke="#3f7ff0" stroke-width="5"/><circle cx="27" cy="17" r="4" fill="#fff" stroke="#123" stroke-width="2.500"/><path d="M27 8v6" stroke="#3f7ff0" stroke-width="3"/></svg></div>
  <div class="di"><svg viewBox="0 0 54 54"><rect width="54" height="54" rx="12" fill="#4fab6e"/><path d="M8 39q-1-7 3-12Q15 14 29 13q7 1 9 7 6 1 8 5 1 5-3 6-4-2-7 1-1 4-5 3l2-4-6 3q-2 3-3 2v-5q-4 0-6 0-2 6-7 10-3 2-3-2z" fill="#fff"/><circle cx="41" cy="25" r="1" fill="#3d8f5a"/></svg></div>
  <div class="di"><svg viewBox="0 0 54 54"><rect width="54" height="54" rx="12" fill="#5bbb4c"/><circle cx="27" cy="27" r="20" fill="#fff"/><circle cx="27" cy="27" r="8.500" fill="#5bbb4c"/><path d="M6 14.500h42M6 23h14M34 23h14M6 31.500h14M34 31.500h14M6 39.500h42" stroke="#5bbb4c" stroke-width="2.800"/></svg></div>
  <div class="di"><svg viewBox="0 0 54 54"><rect width="54" height="54" rx="12" fill="#fdfdfd"/><path d="M8 10q7-5 11 4 3 9 1 18 1 9 7 14l6 2q-14 2-19-10Q5 24 8 10z" fill="#352a26"/><path d="M22 22q1-12 9-14l8 2q3 5 1 9l-4 3q5 12 0 20-4 6-13 5-4-3 0-10 0-9-1-15z" fill="#8d7560"/><path d="M33 20q7 12 1 24l-9 4q-7-4-2-12 8-3 10-16z" fill="#3f312b"/><path d="M20 28q0-17 9-20M21 30v12" fill="none" stroke="#fff" stroke-width="1.800"/><path d="M36 9q5 1 4 8l-4 2-2-4z" fill="#352a26"/><circle cx="39" cy="38.500" r="10" fill="#6cb4c0"/><text x="39" y="42.500" class="ce">CE</text></svg></div>
  <div class="di"><svg viewBox="0 0 54 54"><rect width="54" height="54" rx="12" fill="#fdfdfd"/><path d="M27 9q17 16 1 32l-.5 5h-1L26 41Q10 25 27 9z" fill="#2a6a4c"/><path d="M26.600 23h1l.3 18h-1.600z" fill="#cfe0d6"/></svg></div>
  <div class="di"><svg viewBox="-4 -4 62 62" class="big"><circle cx="27" cy="27" r="24" fill="#d9d3c5" stroke="#17171a" stroke-width="12"/><circle cx="27" cy="27" r="27" fill="none" stroke="#55565a" stroke-width="1.500" stroke-dasharray="1.500 2"/><circle cx="27" cy="26" r="16" fill="#e8e2d4"/><circle cx="27" cy="26" r="5" fill="#b9b8b4"/><path d="M34-3Q12-6 3 9l-7-6v20l20-1-5-5q5-8 14-7z" fill="#c9302b"/><path d="M24 57q22 1 28-17l6 8V30l-20 1 5 5q-5 9-14 8z" fill="#2f5fd0"/></svg></div>
  <div class="di"><svg viewBox="0 0 54 54"><rect width="54" height="54" rx="12" fill="#161f25"/><path d="M27 11q8 6 7 14l-2 5q3 1 2 5h-2v9h-2v-9h-2v10h-2V35h-2v9h-2v-9h-2q-1-4 2-5l-2-5q-1-8 7-14z" fill="#7fd8cf"/><path d="M15 12Q3 22 10 36q4 7 10 9M39 12q12 10 5 24-4 7-10 9M17 14Q8 23 13 34q3 5 7 7M37 14q9 9 4 20-3 5-7 7" fill="none" stroke="#7fd8cf" stroke-width="1.600"/></svg></div>
  <div class="di"><svg viewBox="0 0 54 54"><rect width="54" height="54" rx="12" fill="#22123c"/><circle cx="27" cy="28" r="23" fill="#f4772f"/><path d="M5 34q6 10 20 9 15-2 20-15l5 0q0 22-23 23Q8 50 5 34z" fill="#ea3b5c"/><path d="M28 14Q27 8 35 3q-1 6 5 10 10 8 10 18-2 8-8 10 2-14-4-20-4-4-10-7z" fill="#fdd545"/><path d="M5 20L8 11l5 5 3-4 5 7 6 0-4 8z" fill="#f79a35"/><path d="M0 0h33Q27 6 28 14q-6 0-9 4l-4-7-3 4-4-5-6 13H0z" fill="#22123c" clip-path="url(#sq)"/><circle cx="27" cy="27" r="11" fill="#7c45dc"/><path d="M7 24l8-4q5 4 9 3-1 5-7 7-2 8 8 9-12 3-18-15z" fill="#f68a33"/></svg></div>
  <div class="di"><svg viewBox="0 0 54 54"><rect width="54" height="54" rx="12" fill="#fdfdfd"/><path d="M18 4h18l4 4 6 1-1 8 1 4-6 21-13 10-13-10L8 21l1-4-1-8 6-1z" fill="#e4572e"/><path d="M17 12l4-2 6 1 6-1 4 2 5 7-2 6-6 6 1 4-4 2 1 3-5 5-5-5 1-3-4-2 1-4-6-6-2-6z" fill="#fff"/><path d="M17 19l7 2-3 4zM37 19l-7 2 3 4zM24 31l3 2 3-2-3 6z" fill="#e4572e"/></svg></div>
  <div class="di"><svg viewBox="0 0 54 54"><defs><linearGradient id="cv" x1=".2" y1="0" x2=".7" y2="1"><stop stop-color="#4fc0c8"/><stop offset=".5" stop-color="#4a93da"/><stop offset="1" stop-color="#6a2ee0"/></linearGradient></defs><rect width="54" height="54" rx="12" fill="url(#cv)"/><text x="27" y="32" class="canva">Canva</text></svg></div>
  <div class="di run"><svg viewBox="0 0 54 54"><defs><radialGradient id="kd" cy=".6"><stop stop-color="#d5f3fb"/><stop offset="1" stop-color="#3f8fbd"/></radialGradient></defs><g clip-path="url(#sq)"><rect width="54" height="54" fill="url(#kd)"/><path d="M0 50q15-12 26-4 18-6 28 5v3H0z" fill="#050505"/></g><circle cx="20" cy="10" r="6" fill="#050505"/><path d="M15 16h8l2 10 7-1 4-8 2 1-4 12-8 2 7 2 5 12-3 2-8-10-5 10-14-1q-2-24 7-31z" fill="#050505"/></svg></div>
  <div class="dsep"></div>
  <div class="di run"><svg viewBox="0 0 54 54"><rect width="54" height="54" rx="12" fill="#e58a32"/><path d="M33 7l21 22v14q0 11-12 11H18L8 43z" fill="#cf7326"/><path d="M27 16L16 34M27 16l11 18" stroke="#fff" stroke-width="3.500"/><g fill="#fff"><rect x="19" y="7" width="16" height="13" rx="2"/><rect x="7.500" y="30" width="15" height="13" rx="2"/><rect x="31.500" y="30" width="15" height="13" rx="2"/></g></svg></div>
  <div class="di run"><svg viewBox="0 0 54 54"><g clip-path="url(#sq)"><rect width="54" height="54" fill="#f2f0ec"/><rect width="54" height="13" fill="#f9cb44"/><path d="M0 15.500h54" stroke="#a9a59c" stroke-width="1.500" stroke-dasharray="1.500 1.500"/><path d="M0 27h54M0 40h54" stroke="#cfccc5" stroke-width="1.200"/></g></svg></div>
  <div class="di run"><svg viewBox="0 0 54 54"><rect width="54" height="54" rx="12" fill="#fafafa"/><g id="chr"><circle cx="27" cy="27" r="23" fill="#fbcb3c"/><path d="M27 27L7 15.500a23 23 0 0 1 40 0z" fill="#dc4437"/><path d="M27 27L7 15.500A23 23 0 0 0 27 50l9-17z" fill="#3c9c51"/><circle cx="27" cy="27" r="11.500" fill="#fff"/><circle cx="27" cy="27" r="9" fill="#3c7de8"/></g></svg></div>
  <div class="di run"><svg viewBox="0 0 54 54"><defs><linearGradient id="ml" x2="0" y2="1"><stop stop-color="#3470ea"/><stop offset="1" stop-color="#57bdf9"/></linearGradient></defs><rect width="54" height="54" rx="12" fill="url(#ml)"/><rect x="8" y="15" width="38" height="25" rx="3" fill="#f3f3f3"/><path d="M9 16l18 15 18-15M9 39l13-12M45 39L32 27" fill="none" stroke="#a6a8ac" stroke-width="1.500"/></svg></div>
  <div class="di run"><svg viewBox="0 0 54 54"><rect width="54" height="54" rx="12" fill="#fcfcfc"/><circle cx="28" cy="15" r="5.500" fill="#7b83eb"/><circle cx="41" cy="16" r="4" fill="#5059c9"/><path d="M34 22h12v13q0 5-5 5-7-1-7-6z" fill="#5059c9"/><path d="M19 22h18v14q0 9-9 9t-9-9z" fill="#7b83eb"/><rect x="7" y="18" width="20" height="20" rx="2" fill="#4b53bc"/><text x="17" y="33" class="teams">T</text></svg></div>
  <div class="di run"><svg viewBox="0 0 54 54"><rect width="54" height="54" rx="11" fill="#eceae8"/><rect x="4" y="4" width="46" height="46" rx="5" fill="#86aae2"/><path d="M4 30h46v15q0 5-5 5H9q-5 0-5-5z" fill="#273e66"/><path d="M5 42q8-8 16-2l6 9H9q-4 0-4-4z" fill="#d8dde4"/><path d="M29 36h22l4 18q-14 5-30 0z" fill="#cfd6da"/><path d="M31 42l6 3-4 5zM42 43l6 2-5 6z" fill="#5c6f86"/><path d="M28 28q12-3 24 0v9q-12 3-24 0z" fill="#111"/></svg></div>
  <div class="dsep s2"></div>
  <div class="thumb"><svg viewBox="0 0 64 54"><rect y="8" width="64" height="38" fill="#f1f3f6"/><rect y="8" width="64" height="3" fill="#c7d3ea"/><path d="M8 18h12M8 23h12M8 28h12M8 33h12M8 38h12M44 15h14M44 20h10M44 26h12M44 32h9" stroke="#8c9096" stroke-width="1.500"/><rect x="42" y="37" width="19" height="19" rx="4" fill="#fff"/><use href="#chr" transform="translate(42.300 37.300) scale(.34)"/></svg></div>
  <div class="thumb t2nd"><svg viewBox="0 0 62 54"><rect y="23" width="62" height="7" fill="#e9eaec"/><path d="M3 26.500h36" stroke="#999" stroke-width="1.500"/><rect x="40" y="24" width="15" height="5" rx="1" fill="#2a5fc9"/><rect x="41" y="37" width="19" height="19" rx="4" fill="#fff"/><use href="#chr" transform="translate(41.300 37.300) scale(.34)"/></svg></div>
  <div class="trash"><svg viewBox="0 0 50 64"><path d="M1 12h48l-6 46q-18 8-36 0z" fill="#d9dadb"/><path d="M8 16l4 40M18 16l2 44M32 16l-2 44M42 16l-4 40" stroke="#cfd1d2" stroke-width="2"/><ellipse cx="25" cy="12" rx="24" ry="6" fill="#b9bcbe" stroke="#eee" stroke-width="2"/><path d="M8 12l4-9 8 4 5-6 7 5 6-3 5 9-8 4H15z" fill="#f3f3f3"/><path d="M12 6l6 3-3 4zM24 4l5 3-5 4zM35 6l4 4-5 2z" fill="#5b6164"/></svg></div>
</footer>
</body>
</html>
```
FILE: styles.css
```css
* { box-sizing: border-box; }
html, body { margin: 0; }
body {
  width: 3024px; height: 1964px; overflow: hidden; position: relative;
  display: flex; flex-direction: column;
  background: #5c9790;
  font-family: Inter, "Liberation Sans", sans-serif; color: #000;
}
svg { display: block; flex: none; overflow: visible; }
.wallpaper { position: absolute; left: 0; bottom: 0; width: 3024px; height: 124px; overflow: hidden; }

/* menu bar */
.menubar { position: relative; height: 74px; flex: none; display: flex; align-items: center; background: linear-gradient(95deg, #629e98 0%, #5f9b95 30%, #5b9690 60%, #528680 100%); color: #9dc6c1; font-size: 26px; white-space: nowrap; }
.menubar span { margin-top: -2px; }
.apple { width: 26px; height: 31px; margin-left: 41px; margin-top: -4px; fill: #97c2bd; }
.mb-app { margin-left: 41px; width: 137px; font-weight: 700; letter-spacing: 0; color: #98c4be; }
.mb-item { width: 60px; letter-spacing: -.4px; color: #92c1bb; }
.status { width: 790px; height: 74px; margin-left: 1645px; }
.st-a { font-size: 23px; font-weight: 600; text-anchor: middle; fill: #97d3cb; }
.mb-date { margin-left: 14px; width: 138px; color: #97cfc6; font-weight: 500; letter-spacing: -.2px; }
.mb-time { color: #97cfc6; font-weight: 500; letter-spacing: 0; }

/* window */
.window { position: relative; flex: none; margin-top: 5px; height: 1779px; display: flex; flex-direction: column; border-radius: 20px; overflow: hidden; background: #f1f3f4; box-shadow: 0 -1px 0 #a5a9b3, 0 -3px 0 #d4d7de, 0 -4px 0 #31484a, 0 2px 0 #59605f, 0 6px 30px rgba(0,0,0,.6); }
.titlebar { height: 59px; flex: none; border-bottom: 2px solid #cacaca; background: #eaeae8; display: flex; align-items: center; }
.lights { display: flex; gap: 16px; padding-left: 16px; width: 132px; }
.lights i { width: 24px; height: 24px; border-radius: 50%; background: #d0d0d0; border: 1px solid #b4b4b4; }
.wtitle { flex: 1; text-align: center; padding-right: 134px; margin-top: -2px; font-weight: 700; font-size: 26px; color: #a9a9a9; letter-spacing: .15px; }

.appheader { height: 128px; flex: none; border-bottom: 2px solid #dadce0; background: #f1f3f6; display: flex; padding-left: 32px; }
.logo { width: 64px; height: 72px; margin-top: 26px; }
.doc { margin-left: 40px; margin-top: 15px; flex: 1; }
.filename { font-size: 35px; line-height: 46px; letter-spacing: -.9px; }
.menus { display: flex; margin-top: 15px; font-size: 27.500px; line-height: 38px; letter-spacing: -.4px; }
.m-file { width: 75px; } .m-edit { width: 80px; } .m-view { width: 92px; } .m-arr { width: 133px; } .m-ext { width: 111px; }
.sun { width: 34px; height: 34px; margin: 9px 21px 0 0; }

.toolbar { height: 76px; flex: none; border-top: 2px solid #fff; border-bottom: 2px solid #d0d2d4; background: #f1f3f6; display: flex; }
.tg { height: 72px; }
.sep { background: linear-gradient(#dfe1e5, #dfe1e5) 0 16px / 2px 39px no-repeat; }
.w1 { width: 133px; } .w2 { width: 158px; } .w3 { width: 146px; } .w4 { width: 146px; } .w5 { width: 86px; } .w6 { width: 145px; } .w7 { width: 206px; } .w8 { width: 203px; } .w9 { width: 114px; } .w10 { width: 100px; }
.right { width: 154px; margin-left: auto; }
.zoomtext { font-size: 27px; }

.workspace { flex: 1; display: flex; min-height: 0; }

/* shape sidebar */
.sidebar { width: 426px; flex: none; border-right: 2px solid #dadce0; background: #f1f3f6; display: flex; flex-direction: column; }
.scroller { height: 1410px; display: flex; overflow: hidden; }
.sections { width: 404px; flex: none; }
.searchwrap { height: 120px; padding: 28px 0 0 16px; border-bottom: 2px solid #e3e5e8; }
.search { width: 372px; height: 56px; background: #fff; border: 2px solid #d5d5d5; border-radius: 8px; display: flex; align-items: center; justify-content: space-between; padding: 0 10px 0 12px; font-size: 24px; color: #757575; letter-spacing: -.3px; }
.search span { margin-top: -1px; }
.search svg { width: 24px; height: 24px; margin-top: -3px; }
.sec { height: 70.400px; display: flex; align-items: center; border-bottom: 2px solid #e3e5e8; font-size: 25px; font-weight: 600; letter-spacing: .2px; }
.sec span { white-space: nowrap; margin: 3px 0 0 -1px; }
.open { height: 70px; }
.open span { margin-top: 2px; }
.arrow { width: 0; height: 0; flex: none; border: 0 solid transparent; }
.down { border-width: 9px 8px 0; border-top-color: #9a9a9a; margin: 0 13px 0 12px; }
.rt { border-width: 8.500px 0 8.500px 9px; border-left-color: #9a9a9a; margin: 0 16px 0 16px; }
.tools { width: 132px; height: 26px; margin-left: auto; margin-right: 24px; }
.qm { font-size: 25px; font-weight: 600; fill: #a4a4a4; }
.scratch { height: 112px; border-bottom: 2px solid #e3e5e8; display: grid; padding: 24px 0 0 31px; }
.scratch svg { grid-area: 1 / 1; width: 350px; height: 64px; }
.scratch span { grid-area: 1 / 1; width: 350px; height: 65px; line-height: 65px; text-align: center; color: #a0a0a0; font-size: 25.500px; }
.palette { display: grid; grid-template-columns: repeat(5, 72px); grid-auto-rows: 68px; padding: 14px 0 11px 21px; height: 638px; border-bottom: 2px solid #e3e5e8; }
.palette svg { width: 72px; height: 68px; fill: none; stroke: #000; stroke-width: 2.200; }
.palette text { fill: #000; stroke: none; font-family: "Liberation Sans", sans-serif; }
.palette .solid { fill: #000; stroke-width: .5; }
.palette .sh1 { fill: #e3e4e6; } .palette .sh2 { fill: #d5d6d8; }
.vbar { width: 14px; margin: 3px 0 0 3px; height: 1319px; border-radius: 7px; background: #d9dbda; }
.sidefoot { flex: 1; border-top: 2px solid #dadce0; display: flex; align-items: flex-start; justify-content: center; padding: 22px 0 0; }
.more { width: 234px; height: 60px; background: #5d8df6; border: 2px solid #4376e4; border-radius: 6px; color: #fff; font-size: 27px; display: flex; align-items: center; justify-content: center; gap: 11px; letter-spacing: -.3px; white-space: nowrap; padding-bottom: 1px; }
.more svg { width: 18px; height: 18px; }

/* canvas */
.center { flex: 1; min-width: 0; display: flex; flex-direction: column; border-top: 2px solid #e2e3e5; background: #fafafa; }
.canvasrow { display: flex; height: 1422px; flex: none; }
.canvas { width: 2098px; height: 1422px; overflow: hidden; }
.dt { font-family: "Liberation Sans", Arial, sans-serif; }
.cvbar { flex: 1; padding: 380px 0 0 3px; }
.cvbar i { display: block; width: 14px; height: 388px; border-radius: 7px; background: #e1e1e1; }
.chbar { height: 18px; flex: none; padding: 3px 0 0 779px; }
.chbar i { display: block; width: 549px; height: 14px; border-radius: 7px; background: #dedede; }
.tabs { flex: 1; border-top: 2px solid #dadce0; background: #f1f3f6; display: flex; color: #666; font-size: 24px; font-weight: 600; letter-spacing: .1px; }
.tab { flex: none; border-right: 2px solid #d3d4d9; display: flex; align-items: center; justify-content: center; white-space: nowrap; overflow: hidden; }
.tab.active { background: #fff; gap: 14px; padding-left: 2px; }
.tab.active svg { width: 14px; height: 8px; }
.t-dots { width: 46px; } .t-dots svg { width: 8px; height: 32px; }
.t1 { width: 123px; } .t2 { width: 195px; } .t3 { width: 142px; } .t4 { width: 140px; } .t5 { width: 133px; } .t6 { width: 150px; } .t7 { width: 132px; } .t8 { width: 149px; } .t9 { width: 151px; } .t10 { width: 184px; }
.t11 { width: 30px; justify-content: flex-end; align-items: flex-start; padding: 28px 1px 0 0; }
.t11 svg { width: 4px; height: 8px; }
.t12 { width: 45px; border-color: #e3e4e8; padding-right: 2px; } .t12 svg { width: 28px; height: 28px; }
.t13 { width: 46px; } .t13 svg { width: 13px; height: 22px; }
.t14 { flex: 1; border-right: 0; } .t14 svg { width: 13px; height: 22px; }

/* format panel */
.format { width: 482px; flex: none; border-left: 2px solid #dadce0; background: #f1f3f6; color: #5e5e5e; font-size: 24px; }
.ftabs { display: flex; height: 68px; font-weight: 700; font-size: 25.500px; letter-spacing: .2px; }
.ft { display: flex; align-items: center; justify-content: center; border-bottom: 2px solid #dadce0; background: #e4e4e4; }
.ft.on { width: 212px; background: none; border: 0; padding-bottom: 1px; }
.ft.off { width: 216px; border-left: 1px solid #dadce0; border-right: 2px solid #dadce0; padding-bottom: 3px; }
.ft.x { flex: 1; padding-bottom: 4px; padding-right: 2px; } .ft.x svg { width: 20px; height: 20px; }
.fsec { border-bottom: 2px solid #dadce0; padding: 0 32px 0 28px; }
h4 { margin: 0; font-size: 24px; font-weight: 700; line-height: 30px; }
.s1 { height: 327px; padding-top: 29px; }
.s2 { height: 274px; padding-top: 24px; }
.s3 { height: 189px; padding-top: 25px; }
.s4 { height: 130px; padding-top: 24px; display: flex; flex-direction: column; gap: 4px; }
.fr { height: 48px; display: flex; align-items: center; }
.r-grid { height: 44px; margin-top: 15px; }
.s2 h4 { margin-bottom: 11px; }
.cb { width: 26px; height: 26px; flex: none; border: 2px solid #767676; border-radius: 4px; background: #fff; margin-right: 12px; }
.cb.on { background: #3071f6; border: 0; }
.cb.on path { fill: none; stroke: #fff; stroke-width: 3.600; }
.cb.none { visibility: hidden; }
label { white-space: nowrap; letter-spacing: -.05px; }
.half { width: 170px; }
.ctl { margin-left: auto; display: flex; align-items: center; gap: 2px; }
.num { width: 95px; height: 42px; border: 2px solid #dadada; border-radius: 6px; background: #fff; color: #000; text-align: right; padding-right: 3px; line-height: 40px; }
.spin { width: 23px; height: 42px; border: 2px solid #dfdfdf; border-radius: 5px; }
.spin svg { width: 19px; height: 38px; }
.colorbtn { width: 92px; height: 44px; margin-left: 6px; border: 2px solid #dadada; border-radius: 7px; background: #eee; display: flex; align-items: center; gap: 6px; padding-left: 6px; }
.colorbtn i { width: 46px; height: 28px; border: 2px solid #000; background: #cfcfcf; }
.colorbtn svg { width: 21px; height: 21px; }
.btn { height: 40px; border: 2px solid #dadada; border-radius: 7px; background: #eee; color: #000; text-align: center; line-height: 36px; white-space: nowrap; letter-spacing: -.1px; }
.change { width: 220px; height: 42px; margin-left: auto; line-height: 37px; }
.select { margin-top: 11px; width: 412px; height: 42px; border: 2px solid #d5d5d5; border-radius: 6px; background: #eee; color: #000; display: flex; align-items: center; justify-content: space-between; padding: 0 6px 0 13px; letter-spacing: -.05px; }
.select svg { width: 18px; height: 12px; }
.radios { display: flex; align-items: center; margin-top: 22px; padding-left: 18px; height: 28px; }
.rd { width: 26px; height: 26px; border: 2px solid #767676; border-radius: 50%; background: #fff; margin-right: 12px; }
.rd.on { border-color: #3071f6; background: radial-gradient(circle, #3071f6 0 7.500px, #fff 8.500px); }
.radios label { margin-top: 6px; }
.lp { width: 104px; }

.shade { position: absolute; left: 0; right: 0; bottom: 0; height: 90px; background: linear-gradient(rgba(0,0,0,0), rgba(0,0,0,.03) 55%, rgba(0,0,0,.13)); }

/* dock */
.dock { position: relative; flex: none; margin: 6px 0 0 55px; width: 2914px; height: 90px; border-radius: 30px; border: 2px solid rgba(255,255,255,.22); display: flex; padding-left: 3px;
  background: linear-gradient(90deg, #7a6566 0, #78696a 240px, #895f5f 440px, #9a5b5a 520px, #756264 640px, #65666a 850px, #5f6e70 1080px, #656568 1250px, #7d8281 1400px, #a5938c 1510px, #c3928d 1590px, #b49c96 1660px, #a5aea7 1760px, #a8b4ac 1980px, #8f9996 2250px, #8f9896 2560px, #a98185 2690px, #8d7079 2800px, #7b5968 2914px); }
.di { width: 72.770px; flex: none; position: relative; display: flex; justify-content: center; align-items: flex-start; padding-top: 13px; }
.di > svg { width: 54px; height: 54px; filter: drop-shadow(0 1px 1px rgba(0,0,0,.35)); }
.di > svg.big { width: 64px; height: 62px; margin-top: -4px; }
.run::after { content: ""; position: absolute; bottom: 2px; left: 32.500px; width: 8px; height: 8px; border-radius: 50%; background: #0b0b0d; }
.badge { position: absolute; right: 2px; top: 8px; width: 25px; height: 25px; border-radius: 50%; background: #e34b3d; color: #fff; font-size: 15px; line-height: 25px; text-align: center; }
.dsep { width: 2px; height: 66px; margin: 10px 14px 0 17px; background: rgba(40,50,50,.5); flex: none; }
.dsep.s2 { margin: 10px 20px 0 16px; height: 66px; padding: 0; background: rgba(60,40,50,.5); }
.thumb { padding-top: 13px; } .thumb svg { width: 64px; height: 54px; }
.t2nd { margin-left: 9px; } .t2nd svg { width: 62px; }
.trash { margin-left: 16px; padding-top: 7px; } .trash svg { width: 49px; height: 64px; }
.aug { font-size: 10.500px; font-weight: 700; fill: #fff; text-anchor: middle; }
.one { font-size: 31px; fill: #333; text-anchor: middle; font-weight: 300; }
.tv { font-size: 20px; font-weight: 600; fill: #fff; }
.exl { font-size: 16px; font-weight: 700; fill: #fff; text-anchor: middle; }
.ce { font-size: 11px; font-weight: 600; fill: #fff; text-anchor: middle; }
.canva { font-size: 17px; font-style: italic; font-weight: 700; fill: #fff; text-anchor: middle; font-family: "Liberation Serif", serif; }
.teams { font-size: 16px; font-weight: 700; fill: #fff; text-anchor: middle; }
```
